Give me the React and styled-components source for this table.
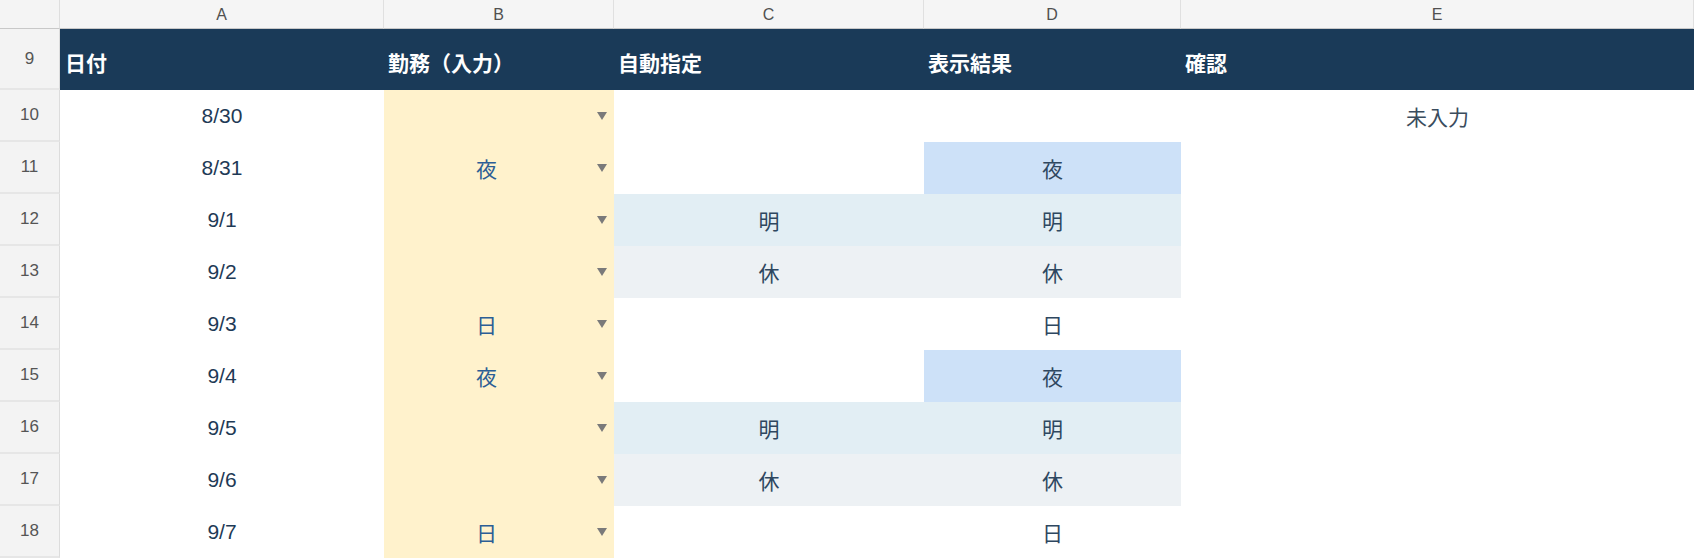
import React from "react";
import styled, { createGlobalStyle } from "styled-components";

const Global = createGlobalStyle`
  html, body { margin: 0; padding: 0; background: #ffffff; }
  body { font-family: "Liberation Sans", "Noto Sans CJK JP", sans-serif; }
`;

const Sheet = styled.div`
  display: grid;
  grid-template-columns: 60px 324px 230px 310px 257px 1fr;
  grid-template-rows: 29px 61px repeat(9, 52px);
  width: 1694px;
  height: 558px;
  overflow: hidden;
  background: #ffffff;
`;

const Corner = styled.div`
  background: #f4f4f4;
  border-right: 1px solid #dedede;
  border-bottom: 1px solid #c8c8c8;
  box-sizing: border-box;
`;

const ColHeader = styled.div`
  background: #f5f5f5;
  border-right: 1px solid #e0e0e0;
  border-bottom: 1px solid #c8c8c8;
  box-sizing: border-box;
  display: flex;
  align-items: center;
  justify-content: center;
  font-family: "Liberation Sans", sans-serif;
  font-size: 16px;
  color: #505050;
  padding-top: 1px;
`;

const RowHeader = styled.div`
  background: #f3f3f3;
  border-right: 1px solid #dcdcdc;
  border-bottom: 2px solid #e6e6e6;
  box-sizing: border-box;
  display: flex;
  align-items: center;
  justify-content: center;
  font-family: "Liberation Sans", sans-serif;
  font-size: 17px;
  color: #555555;
`;

const TitleCell = styled.div`
  background: #1a3a58;
  display: flex;
  align-items: center;
  padding: 4px 0 0 ${(p) => p.$pad || 4}px;
  box-sizing: border-box;
  font-family: "Noto Sans CJK JP", sans-serif;
  font-weight: 700;
  font-size: 21px;
  color: #ffffff;
  white-space: nowrap;
`;

const Cell = styled.div`
  background: ${(p) => p.$bg || "#ffffff"};
  color: ${(p) => p.$color || "#1e3a56"};
  display: flex;
  align-items: center;
  justify-content: center;
  font-family: "Liberation Sans", "Noto Sans CJK JP", sans-serif;
  font-size: 21px;
  box-sizing: border-box;
  white-space: nowrap;
`;

const DropCell = styled.div`
  position: relative;
  background: #fff2cc;
  color: #2c5e95;
  display: flex;
  align-items: center;
  justify-content: center;
  padding-right: 25px;
  box-sizing: border-box;
  font-family: "Noto Sans CJK JP", sans-serif;
  font-size: 21px;
`;

const Arrow = styled.span`
  position: absolute;
  right: 7px;
  top: 50%;
  margin-top: -4px;
  width: 0;
  height: 0;
  border-left: 5.5px solid transparent;
  border-right: 5.5px solid transparent;
  border-top: 8px solid #7a7a7a;
`;

const COLORS = {
  mei: "#e2eef4",
  kyu: "#edf1f4",
  yoru: "#cde1f8",
};

const bgFor = (v, col) => {
  if (v === "明") return COLORS.mei;
  if (v === "休") return COLORS.kyu;
  if (v === "夜" && col === "D") return COLORS.yoru;
  return "#ffffff";
};

const rows = [
  { n: 10, date: "8/30", b: "", c: "", d: "", e: "未入力" },
  { n: 11, date: "8/31", b: "夜", c: "", d: "夜", e: "" },
  { n: 12, date: "9/1", b: "", c: "明", d: "明", e: "" },
  { n: 13, date: "9/2", b: "", c: "休", d: "休", e: "" },
  { n: 14, date: "9/3", b: "日", c: "", d: "日", e: "" },
  { n: 15, date: "9/4", b: "夜", c: "", d: "夜", e: "" },
  { n: 16, date: "9/5", b: "", c: "明", d: "明", e: "" },
  { n: 17, date: "9/6", b: "", c: "休", d: "休", e: "" },
  { n: 18, date: "9/7", b: "日", c: "", d: "日", e: "" },
];

export default function App() {
  return (
    <>
      <Global />
      <Sheet>
        <Corner />
        {["A", "B", "C", "D", "E"].map((l) => (
          <ColHeader key={l}>{l}</ColHeader>
        ))}

        <RowHeader>9</RowHeader>
        <TitleCell $pad={5}>日付</TitleCell>
        <TitleCell>勤務（入力）</TitleCell>
        <TitleCell>自動指定</TitleCell>
        <TitleCell>表示結果</TitleCell>
        <TitleCell>確認</TitleCell>

        {rows.map((r) => (
          <React.Fragment key={r.n}>
            <RowHeader>{r.n}</RowHeader>
            <Cell $color="#1e3a56">{r.date}</Cell>
            <DropCell>
              {r.b}
              <Arrow />
            </DropCell>
            <Cell $bg={bgFor(r.c, "C")} $color="#2e4760">
              {r.c}
            </Cell>
            <Cell $bg={bgFor(r.d, "D")} $color="#2e4760">
              {r.d}
            </Cell>
            <Cell $color="#3a4c5d">{r.e}</Cell>
          </React.Fragment>
        ))}
      </Sheet>
    </>
  );
}
